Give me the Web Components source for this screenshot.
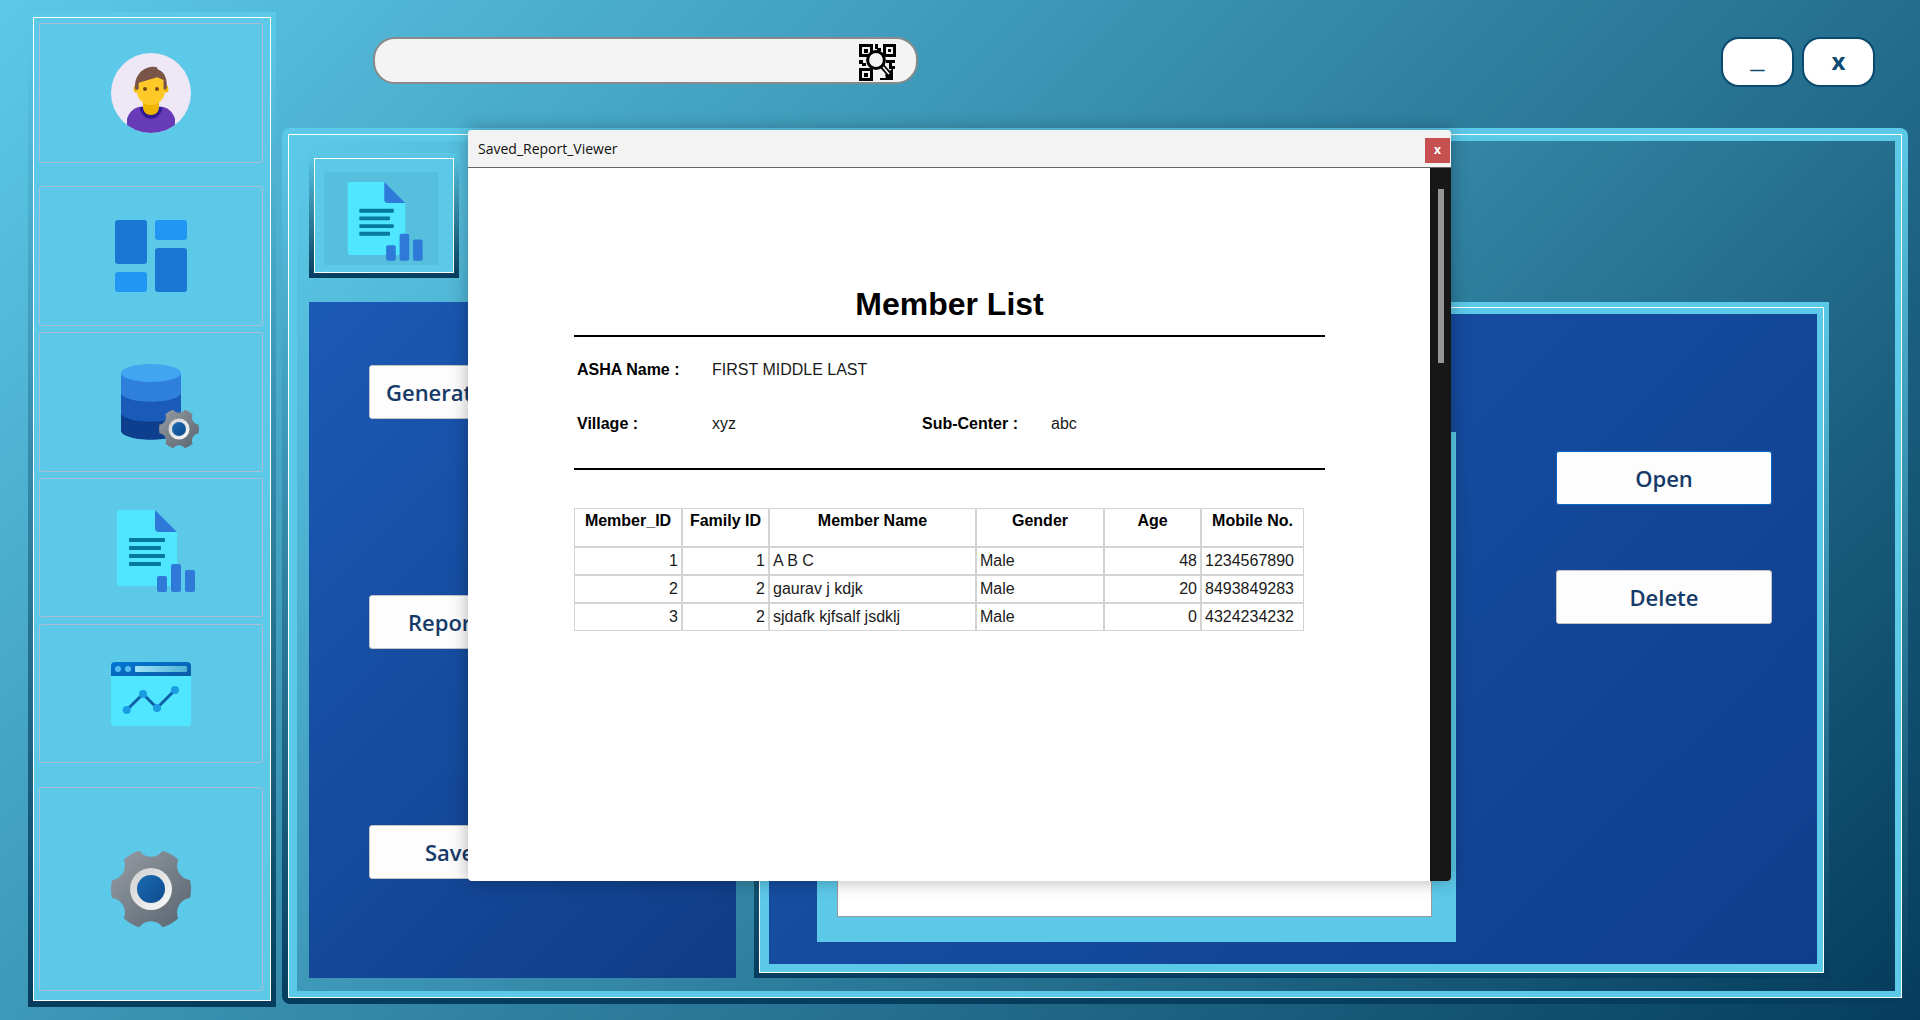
<!DOCTYPE html>
<html lang="en">
<head>
<meta charset="utf-8">
<title>Saved_Report_Viewer</title>
<style>
    html, body { margin: 0; padding: 0; }
    body {
        width: 1920px;
        height: 1020px;
        overflow: hidden;
        background: linear-gradient(135deg, #5cc9e8, #063d5e);
        font-family: "Liberation Sans", sans-serif;
    }
</style>
</head>
<body>
<app-shell>
    <side-bar slot="side">
        <side-item style="--h:140px;--mt:0"><app-icon name="avatar"></app-icon></side-item>
        <side-item style="--h:140px;--mt:23px"><app-icon name="dashboard"></app-icon></side-item>
        <side-item style="--h:140px;--mt:6px"><app-icon name="database"></app-icon></side-item>
        <side-item style="--h:139px;--mt:6px"><app-icon name="report"></app-icon></side-item>
        <side-item style="--h:139px;--mt:7px"><app-icon name="window"></app-icon></side-item>
        <side-item style="--h:204px;--mt:24px"><app-icon name="gear"></app-icon></side-item>
    </side-bar>
    <top-bar slot="top">
        <search-box></search-box>
        <window-buttons></window-buttons>
    </top-bar>
    <main-panel slot="main">
        <icon-tile slot="tile"><app-icon name="report" style="--s:.96"></app-icon></icon-tile>
        <action-button slot="left" style="--pad:16px">Generate</action-button>
        <action-button slot="left" style="--pad:38px">Report</action-button>
        <action-button slot="left" style="--pad:55px">Save</action-button>
        <action-button slot="right" class="open" style="--align:center">Open</action-button>
        <action-button slot="right" style="--align:center">Delete</action-button>
    </main-panel>
    <report-modal slot="modal" heading="Saved_Report_Viewer">
        <member-report></member-report>
    </report-modal>
</app-shell>

<script>
function gearPath(cx, cy, R) {
    const d = 13, rc = R * 0.36, pt = (a) => {
        const r = a * Math.PI / 180;
        return (cx + R * Math.cos(r)).toFixed(2) + ' ' + (cy + R * Math.sin(r)).toFixed(2);
    };
    let p = 'M' + pt(-d);
    for (let i = 0; i < 6; i++) {
        const a = i * 60;
        p += ` A${R} ${R} 0 0 1 ${pt(a + d)} A${rc} ${rc} 0 0 0 ${pt(a + 60 - d)}`;
    }
    return p + ' Z';
}

const gearDefs = `
    <linearGradient id="gearBody" x1="0" y1="0" x2="1" y2="1">
        <stop offset="0" stop-color="#969ca3"/><stop offset="1" stop-color="#59646f"/>
    </linearGradient>
    <linearGradient id="gearRing" x1="0" y1="0" x2="1" y2="1">
        <stop offset="0" stop-color="#cfcfcf"/><stop offset="1" stop-color="#fafafa"/>
    </linearGradient>
    <linearGradient id="gearHub" x1="0" y1="0" x2="1" y2="1">
        <stop offset="0" stop-color="#1a6ab4"/><stop offset="1" stop-color="#0f4c8c"/>
    </linearGradient>`;

function gear(cx, cy, R) {
    return `<path d="${gearPath(cx, cy, R)}" fill="url(#gearBody)"/>
        <circle cx="${cx}" cy="${cy}" r="${R * 0.525}" fill="url(#gearRing)"/>
        <circle cx="${cx}" cy="${cy}" r="${R * 0.35}" fill="url(#gearHub)"/>`;
}

const ICONS = {
    avatar: `
        <defs><clipPath id="round"><circle cx="40" cy="40" r="40"/></clipPath></defs>
        <circle cx="40" cy="40" r="40" fill="#ede7f6"/>
        <g clip-path="url(#round)">
            <path d="M16 82V66C18 58 25 53.5 32 53.5H48C55 53.5 62 58 64 66V82Z" fill="#673ab7"/>
            <path d="M28.5 54.5C30 62 35 65.8 40 65.8S50 62 51.5 54.5C48 53.6 32 53.6 28.5 54.5Z" fill="#311b92"/>
            <path d="M32 42H48V54C48 59 44.5 62 40 62S32 59 32 54Z" fill="#efb400"/>
            <ellipse cx="25" cy="36" rx="2.4" ry="3.4" fill="#f4b400"/>
            <ellipse cx="55" cy="36" rx="2.4" ry="3.4" fill="#f4b400"/>
            <path d="M25.7 24H54V38C54 46 47 52 40 52S25.7 46 25.7 38Z" fill="#ffca28"/>
            <path d="M24 36C23 24 30 14.5 41 13.7L45.5 14 47 16.5C53 18.5 56.5 25 55.8 35L54 37 52.5 36V27L46.3 24.3 27.7 29.7V36L25.5 37Z" fill="#795548"/>
            <circle cx="34" cy="36" r="2" fill="#784719"/>
            <circle cx="46" cy="36" r="2" fill="#784719"/>
        </g>`,
    dashboard: `
        <rect x="4" y="4" width="32" height="44" rx="3" fill="#1976d2"/>
        <rect x="44" y="4" width="32" height="20" rx="3" fill="#2196f3"/>
        <rect x="44" y="32" width="32" height="44" rx="3" fill="#1976d2"/>
        <rect x="4" y="56" width="32" height="20" rx="3" fill="#2196f3"/>`,
    database: `
        <defs>${gearDefs}</defs>
        <path d="M10 11V68.7C10 73.6 23.4 77.7 40 77.7S70 73.6 70 68.7V11Z" fill="#0e3f8f"/>
        <path d="M10 11V50.7C10 55.6 23.4 59.7 40 59.7S70 55.6 70 50.7V11Z" fill="#1a5ab8"/>
        <path d="M10 11V30.7C10 35.6 23.4 39.7 40 39.7S70 35.6 70 30.7V11Z" fill="#2f7fdc"/>
        <ellipse cx="40" cy="11" rx="30" ry="9" fill="#42a5f0"/>
        ${gear(68, 67, 20)}`,
    report: `
        <path d="M9 2H44L66 24V75A3 3 0 0 1 63 78H9A3 3 0 0 1 6 75V5A3 3 0 0 1 9 2Z" fill="#50e6ff"/>
        <path d="M44 2L66 24H48A4 4 0 0 1 44 20Z" fill="#2f7ad8"/>
        <rect x="18" y="30" width="36" height="4" rx="1" fill="#057a9c"/>
        <rect x="18" y="38" width="32" height="4" rx="1" fill="#057a9c"/>
        <rect x="18" y="46" width="36" height="4" rx="1" fill="#057a9c"/>
        <rect x="18" y="54" width="32" height="4" rx="1" fill="#057a9c"/>
        <rect x="46" y="68" width="10" height="16" rx="2" fill="#2f7ad8"/>
        <rect x="60" y="56" width="10" height="28" rx="2" fill="#2f7ad8"/>
        <rect x="74" y="62" width="10" height="22" rx="2" fill="#2f7ad8"/>`,
    window: `
        <defs>
            <linearGradient id="head" x1="0" y1="0" x2="1" y2="1"><stop offset="0" stop-color="#0078d4"/><stop offset="1" stop-color="#0d5aa7"/></linearGradient>
            <linearGradient id="bar" x1="0" y1="0" x2="1" y2="0"><stop offset="0" stop-color="#a0e2f6"/><stop offset="1" stop-color="#4cb3d6"/></linearGradient>
        </defs>
        <path d="M0 22H80V69A3 3 0 0 1 77 72H3A3 3 0 0 1 0 69Z" fill="#50e6ff"/>
        <path d="M4 8H76A4 4 0 0 1 80 12V22H0V12A4 4 0 0 1 4 8Z" fill="url(#head)"/>
        <circle cx="7" cy="15" r="3" fill="#55bdf2"/>
        <circle cx="17" cy="15" r="3" fill="#55bdf2"/>
        <rect x="24" y="12" width="52" height="6" rx="1" fill="url(#bar)"/>
        <path d="M15.7 56L32 40L46 54L64 36" fill="none" stroke="#0f5fa8" stroke-width="3"/>
        <circle cx="15.7" cy="56" r="4" fill="#1b9de2"/>
        <circle cx="32" cy="40" r="4" fill="#1b9de2"/>
        <circle cx="46" cy="54" r="4" fill="#1b9de2"/>
        <circle cx="64" cy="36" r="4" fill="#1b9de2"/>`,
    gear: `<defs>${gearDefs}</defs>${gear(40, 40, 40)}`
};

class AppIcon extends HTMLElement {
    connectedCallback() {
        const root = this.attachShadow({ mode: 'open' });
        root.innerHTML = `
            <style>
                :host { display: block; width: calc(80px * var(--s, 1)); height: calc(80px * var(--s, 1)); }
                svg { display: block; width: 100%; height: 100%; overflow: visible; }
            </style>
            <svg viewBox="0 0 80 80" xmlns="http://www.w3.org/2000/svg">${ICONS[this.getAttribute('name')]}</svg>`;
    }
}

class FrameBox extends HTMLElement {
    constructor() {
        super();
        this.attachShadow({ mode: 'open' });
        this.shadowRoot.innerHTML = `
            <style>
                :host {
                    display: block;
                    box-sizing: border-box;
                    padding: var(--outer, 5px);
                    border-radius: var(--radius, 0);
                    background: linear-gradient(180deg, #5cc9e8, #063d5e);
                }
                .line {
                    box-sizing: border-box;
                    height: 100%;
                    border: 1px solid #fff;
                    background: #5cc9e8;
                    padding: var(--band, 6px);
                    display: flex;
                }
                .fill {
                    flex: 1;
                    min-width: 0;
                    display: flex;
                    background: var(--fill, transparent);
                }
            </style>
            <div class="line"><div class="fill"><slot></slot></div></div>
        `;
    }
}

class SideBar extends FrameBox {
    constructor() {
        super();
        const style = document.createElement('style');
        style.textContent = `
            :host { width: 248px; height: 995px; --outer: 5px 5px 6px 5px; --band: 5px 7px 9px 5px; }
            .fill { flex-direction: column; }
        `;
        this.shadowRoot.appendChild(style);
    }
}

class SideItem extends HTMLElement {
    constructor() {
        super();
        this.attachShadow({ mode: 'open' });
        this.shadowRoot.innerHTML = `
            <style>
                :host {
                    display: flex;
                    box-sizing: border-box;
                    height: var(--h);
                    margin-top: var(--mt);
                    align-items: center;
                    justify-content: center;
                    border: 1px solid #a9bdd6;
                    border-radius: 2px;
                    flex: none;
                }
            </style>
            <slot></slot>
        `;
    }
}

class TopBar extends HTMLElement {
    constructor() {
        super();
        this.attachShadow({ mode: 'open' });
        this.shadowRoot.innerHTML = `
            <style>
                :host {
                    display: flex;
                    height: 128px;
                    box-sizing: border-box;
                    padding: 37px 45px 0 91px;
                    justify-content: space-between;
                    align-items: flex-start;
                }
            </style>
            <slot></slot>
        `;
    }
}

class SearchBox extends HTMLElement {
    constructor() {
        super();
        this.attachShadow({ mode: 'open' });
        this.shadowRoot.innerHTML = `
            <style>
                :host {
                    display: flex;
                    box-sizing: border-box;
                    width: 545px;
                    height: 47px;
                    background: #f4f4f4;
                    border: 2px solid #8a8a8a;
                    border-radius: 22px;
                    justify-content: flex-end;
                    padding: 5px 20px 0 0;
                }
                svg { display: block; width: 37px; height: 37px; }
            </style>
            <svg viewBox="0 0 37 37" xmlns="http://www.w3.org/2000/svg">
                <path fill-rule="evenodd" d="M0 0H14V13H0ZM3 3V10H11V3Z"/>
                <rect x="5" y="5" width="4" height="4"/>
                <path fill-rule="evenodd" d="M24 0H37V13H24ZM27 3V10H34V3Z"/>
                <rect x="29" y="5" width="3" height="3"/>
                <path fill-rule="evenodd" d="M0 24H14V37H0ZM3 27V34H11V27Z"/>
                <rect x="5" y="29" width="4" height="4"/>
                <path d="M16 0H19V4H22V7H18V5H16ZM0 16H4V19H7V22H3V20H0ZM10 15H12V19H10ZM27 16H36V19H33V22H36V25H30V19H27ZM25 25H28V28H25ZM26 31L34 24V36H21V34H27Z"/>
                <circle cx="17" cy="16" r="8.4" fill="#f4f4f4" stroke="#000" stroke-width="3"/>
                <path d="M23 22L31 31" stroke="#000" stroke-width="5"/>
                <path d="M24 23L30 30" stroke="#fff" stroke-width="1.6"/>
            </svg>
        `;
    }
}

class WindowButtons extends HTMLElement {
    constructor() {
        super();
        this.attachShadow({ mode: 'open' });
        this.shadowRoot.innerHTML = `
            <style>
                :host { display: flex; gap: 8px; }
                button {
                    box-sizing: border-box;
                    width: 73px;
                    height: 50px;
                    padding: 0 0 4px;
                    background: #fff;
                    border: 2px solid #0b4a6c;
                    border-radius: 18px;
                    color: #0b4a72;
                    font: 700 24px "Open Sans", sans-serif;
                }
                .min {
                    padding: 0 0 5px;
                    font-family: "Liberation Sans", sans-serif;
                    -webkit-text-stroke: .6px #0b4a72;
                }
            </style>
            <button class="min">_</button>
            <button>x</button>
        `;
    }
}

class IconTile extends FrameBox {
    constructor() {
        super();
        const style = document.createElement('style');
        style.textContent = `
            :host { width: 150px; height: 125px; --outer: 5px; --radius: 0; --band: 13px 15px 7px 9px; --fill: #57bfde; }
            .fill { align-items: center; justify-content: center; padding-right: 2px; box-sizing: border-box; }
        `;
        this.shadowRoot.appendChild(style);
    }
}

class ActionButton extends HTMLElement {
    constructor() {
        super();
        this.attachShadow({ mode: 'open' });
        this.shadowRoot.innerHTML = `
            <style>
                :host {
                    display: block;
                    box-sizing: border-box;
                    width: 216px;
                    height: 54px;
                    padding-left: var(--pad, 0);
                    text-align: var(--align, left);
                    background: #fdfdfd;
                    border: 1px solid #c4c4c4;
                    border-radius: 3px;
                    color: #163a68;
                    font: 600 22px/52px "Open Sans", sans-serif;
                }
                :host(.open) { border-color: #0a68c0; }
            </style>
            <slot></slot>
        `;
    }
}

class MainPanel extends FrameBox {
    constructor() {
        super();
        const style = document.createElement('style');
        style.textContent = `
            :host {
                width: 1626px;
                height: 876px;
                --outer: 6px;
                --band: 6px 6px 6px 8px;
                --radius: 8px;
                --fill: linear-gradient(135deg, #5cc9e8, #063d5e);
            }
            .fill { padding: 12px 0 13px 12px; gap: 18px; }
            .col { width: 427px; display: flex; flex-direction: column; gap: 24px; flex: none; }
            .blue {
                flex: 1;
                box-sizing: border-box;
                padding: 63px 0 0 60px;
                display: flex;
                flex-direction: column;
                gap: 176px;
                background: linear-gradient(135deg, #1b5ab6, #103c86);
            }
            .right {
                width: 1075px;
                height: 676px;
                align-self: flex-end;
                flex: none;
                --outer: 5px;
                --radius: 0;
                --band: 6px 6px 8px 9px;
                --fill: linear-gradient(135deg, #1a55ac, #0f3e8c);
            }
            .body { flex: 1; display: flex; padding: 118px 0 22px 48px; }
            .well {
                box-sizing: border-box;
                width: 639px;
                flex: none;
                padding: 20px 24px 25px 20px;
                background: #5cc9e8;
                display: flex;
            }
            .text { flex: 1; background: #fff; border: 1px solid #9a9a9a; }
            .actions { margin-left: 100px; padding-top: 19px; display: flex; flex-direction: column; gap: 65px; }
        `;
        this.shadowRoot.appendChild(style);
        const fill = this.shadowRoot.querySelector('.fill');
        fill.innerHTML = `
            <div class="col">
                <slot name="tile"></slot>
                <div class="blue"><slot name="left"></slot></div>
            </div>
            <frame-box class="right">
                <div class="body">
                    <div class="well"><div class="text"></div></div>
                    <div class="actions"><slot name="right"></slot></div>
                </div>
            </frame-box>
        `;
    }
}

class ReportModal extends HTMLElement {
    constructor() {
        super();
        this.attachShadow({ mode: 'open' });
        this.shadowRoot.innerHTML = `
            <style>
                :host {
                    position: absolute;
                    left: 468px;
                    top: 130px;
                    width: 983px;
                    height: 751px;
                    display: flex;
                    flex-direction: column;
                    border-radius: 4px;
                    overflow: hidden;
                    background: #fff;
                    box-shadow: 0 0 18px rgba(0, 0, 0, .3);
                }
                .title {
                    box-sizing: border-box;
                    height: 38px;
                    flex: none;
                    display: flex;
                    align-items: flex-start;
                    justify-content: space-between;
                    background: #f3f3f3;
                    border-bottom: 1px solid #666;
                    font: 14px/38px "Open Sans", sans-serif;
                    color: #111;
                    padding: 0 1px 0 10px;
                }
                .close {
                    width: 25px;
                    height: 25px;
                    margin-top: 8px;
                    background: #c75050;
                    color: #fff;
                    font: 700 12px/24px "Open Sans", sans-serif;
                    text-align: center;
                }
                .body { flex: 1; display: flex; min-height: 0; }
                .page { flex: 1; min-width: 0; }
                .track { width: 21px; flex: none; background: #171717; padding: 21px 7px 0 8px; box-sizing: border-box; }
                .thumb { height: 174px; background: #969696; }
            </style>
            <div class="title"><span class="name"></span><span class="close">x</span></div>
            <div class="body">
                <div class="page"><slot></slot></div>
                <div class="track"><div class="thumb"></div></div>
            </div>
        `;
    }
    connectedCallback() {
        this.shadowRoot.querySelector('.name').textContent = this.getAttribute('heading');
    }
}

class MemberReport extends HTMLElement {
    constructor() {
        super();
        this.attachShadow({ mode: 'open' });
        const members = [
            [1, 1, 'A B C', 'Male', 48, '1234567890'],
            [2, 2, 'gaurav j kdjk', 'Male', 20, '8493849283'],
            [3, 2, 'sjdafk kjfsalf jsdklj', 'Male', 0, '4324234232']
        ];
        const rows = members.map((m) => `
            <tr style="height:28px">
                <td class="n">${m[0]}</td><td class="n">${m[1]}</td><td>${m[2]}</td>
                <td>${m[3]}</td><td class="n">${m[4]}</td><td>${m[5]}</td>
            </tr>`).join('');
        this.shadowRoot.innerHTML = `
            <style>
                :host {
                    display: block;
                    box-sizing: border-box;
                    width: 962px;
                    padding: 118px 105px 0 106px;
                    font: 16px/20px "Liberation Sans", Arial, sans-serif;
                    color: #1a1a1a;
                }
                h1 { margin: 0 0 13px; font: 700 32px/36px "Liberation Sans", Arial, sans-serif; color: #000; text-align: center; }
                hr { margin: 0; height: 2px; border: 0; background: #000; }
                .info {
                    display: grid;
                    grid-template-columns: 135px 210px 129px 1fr;
                    grid-auto-rows: 20px;
                    row-gap: 34px;
                    padding: 23px 0 34px 3px;
                }
                b { color: #000; }
                table {
                    margin-top: 38px;
                    width: 730px;
                    table-layout: fixed;
                    border-collapse: separate;
                    border-spacing: 0;
                }
                th, td { border: 1px solid #d3d3d3; padding: 0 3px; box-sizing: border-box; overflow: hidden; white-space: nowrap; }
                th { height: 39px; vertical-align: top; padding-top: 2px; color: #000; text-align: center; }
                td.n { text-align: right; padding-right: 3px; }
            </style>
            <h1>Member List</h1>
            <hr>
            <div class="info">
                <b>ASHA Name :</b><span style="grid-column: span 3">FIRST MIDDLE LAST</span>
                <b>Village :</b><span>xyz</span><b>Sub-Center :</b><span>abc</span>
            </div>
            <hr>
            <table>
                <colgroup>
                    <col style="width:108px"><col style="width:87px"><col style="width:207px">
                    <col style="width:128px"><col style="width:97px"><col style="width:103px">
                </colgroup>
                <thead><tr>
                    <th>Member_ID</th><th>Family ID</th><th>Member Name</th>
                    <th>Gender</th><th>Age</th><th>Mobile No.</th>
                </tr></thead>
                <tbody>${rows}</tbody>
            </table>
        `;
    }
}

class AppShell extends HTMLElement {
    constructor() {
        super();
        this.attachShadow({ mode: 'open' });
        this.shadowRoot.innerHTML = `
            <style>
                :host {
                    display: flex;
                    position: relative;
                    box-sizing: border-box;
                    width: 1920px;
                    height: 1020px;
                    padding: 12px 0 0 28px;
                    gap: 6px;
                }
                .col { flex: 1; min-width: 0; margin-top: -12px; }
            </style>
            <slot name="side"></slot>
            <div class="col">
                <slot name="top"></slot>
                <slot name="main"></slot>
            </div>
            <slot name="modal"></slot>
        `;
    }
}

customElements.define('app-icon', AppIcon);
customElements.define('frame-box', FrameBox);
customElements.define('side-bar', SideBar);
customElements.define('side-item', SideItem);
customElements.define('top-bar', TopBar);
customElements.define('search-box', SearchBox);
customElements.define('window-buttons', WindowButtons);
customElements.define('icon-tile', IconTile);
customElements.define('action-button', ActionButton);
customElements.define('main-panel', MainPanel);
customElements.define('report-modal', ReportModal);
customElements.define('member-report', MemberReport);
customElements.define('app-shell', AppShell);
</script>
</body>
</html>
